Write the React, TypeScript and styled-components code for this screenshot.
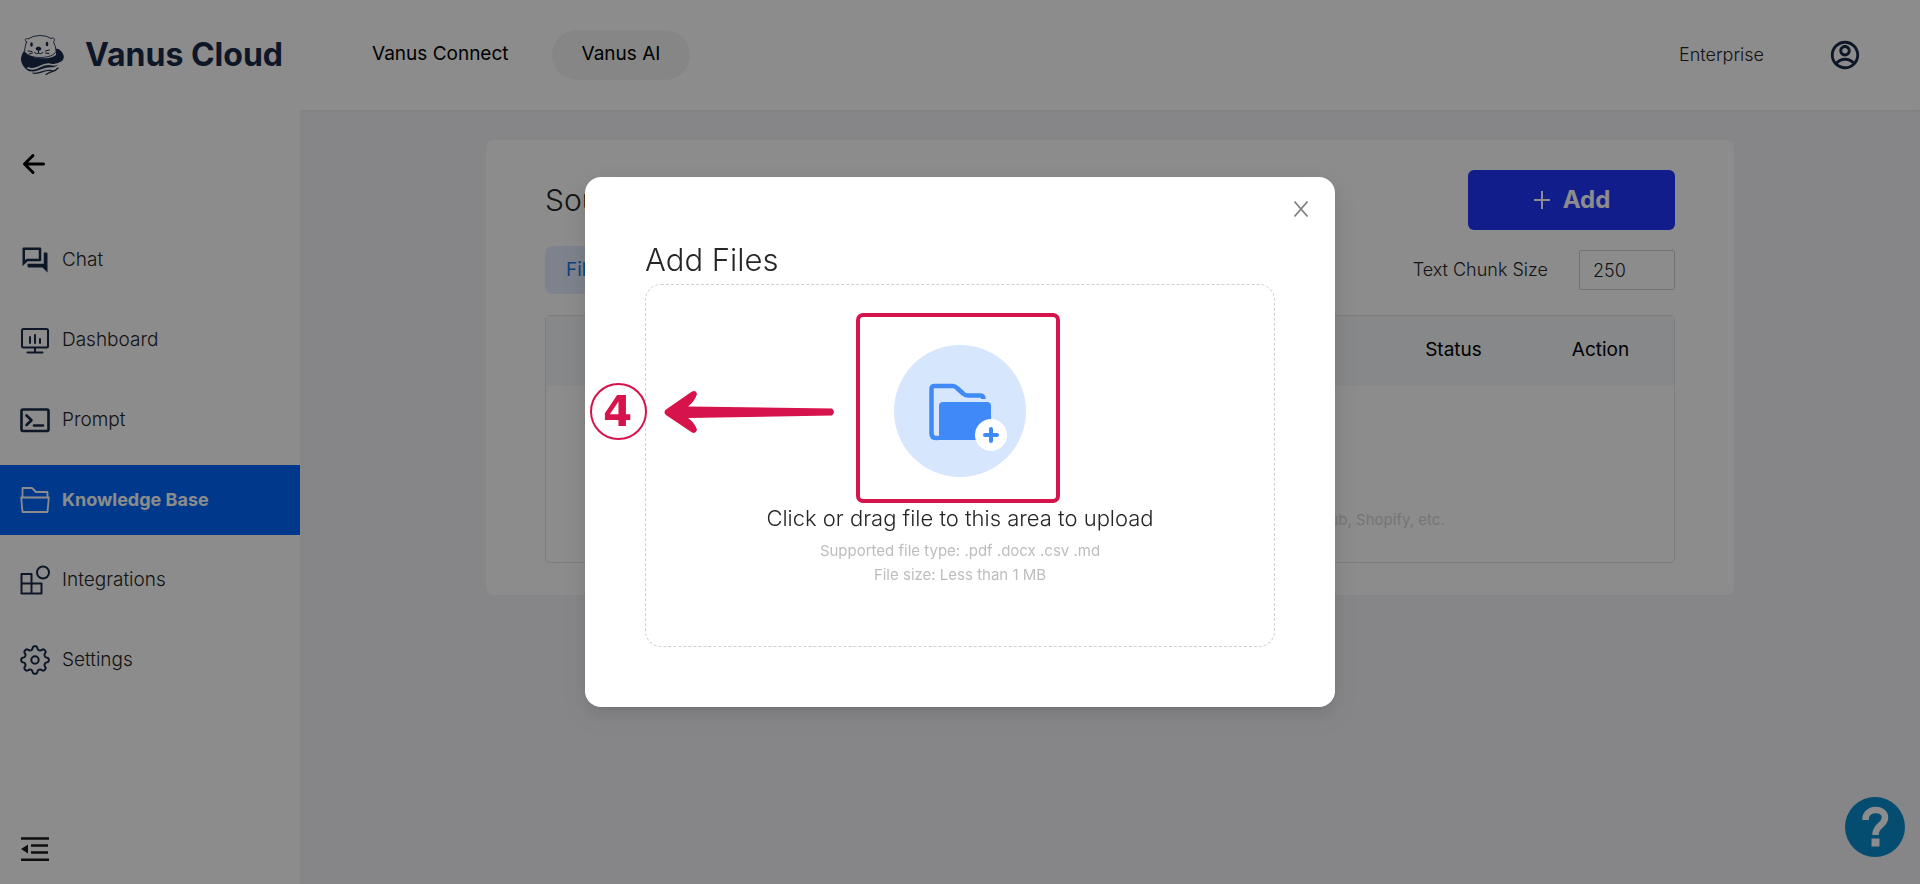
import React from 'react';
import styled, { createGlobalStyle, css } from 'styled-components';
import { MdOutlineForum } from 'react-icons/md';
import { RiAccountCircleLine } from 'react-icons/ri';

const GlobalStyle = createGlobalStyle`
  * { box-sizing: border-box; }
  body {
    margin: 0;
    font-family: Inter, "Open Sans", sans-serif;
    font-weight: 300;
    font-size: 18px;
    line-height: 24px;
    color: #262626;
    background: #f5f5fa;
  }
  button, input { font: inherit; color: inherit; }
  h1, h2, p { margin: 0; font-weight: 300; }
  a { color: inherit; text-decoration: none; }
`;

const navy = '#1a2a48';
const crimson = '#d6134a';

const Page = styled.div`
  display: flex;
  flex-direction: column;
  min-height: 100vh;
`;

const Header = styled.header`
  display: flex;
  align-items: center;
  height: 110px;
  background: #fff;
`;

const Brand = styled.a`
  display: flex;
  align-items: center;
  gap: 20px;
  width: 342px;
  padding-left: 20px;
  font-size: 32px;
  line-height: 40px;
  font-weight: 700;
  color: ${navy};
  white-space: nowrap;
`;

const TopNav = styled.nav`
  display: flex;
  align-items: center;
  gap: 13px;
  flex: 1;
`;

const TopLink = styled.a<{ $active?: boolean }>`
  padding: 12px 30px 14px;
  border-radius: 26px;
  font-size: 19px;
  font-weight: 400;
  color: #000;
  background: ${(p) => (p.$active ? '#f4f4f4' : 'transparent')};
`;

const Account = styled.div`
  display: flex;
  align-items: center;
  gap: 64px;
  padding-right: 58px;
`;

const IconButton = styled.button`
  display: flex;
  padding: 0;
  border: 0;
  background: none;
  color: ${navy};
  cursor: pointer;
`;

const Body = styled.div`
  display: flex;
  flex: 1;
`;

const Sidebar = styled.aside`
  display: flex;
  flex-direction: column;
  justify-content: space-between;
  width: 300px;
  padding: 39px 0 20px;
  background: #fff;
`;

const Back = styled(IconButton)`
  margin: 0 0 46px 20px;
  color: #000;
`;

const Collapse = styled(IconButton)`
  margin-left: 20px;
  color: #1a1a1a;
`;

const Menu = styled.nav`
  display: flex;
  flex-direction: column;
  gap: 10px;
`;

const MenuItem = styled.a<{ $active?: boolean }>`
  display: flex;
  align-items: center;
  gap: 12px;
  height: 70px;
  padding-left: 20px;
  font-size: 19px;
  color: #262626;
  svg { color: ${navy}; }
  ${(p) =>
    p.$active &&
    css`
      background: #0068ff;
      font-size: 18px;
      font-weight: 700;
      color: #fff;
      svg { color: #fff; }
    `}
`;

const Main = styled.main`
  flex: 1;
  padding: 30px 186px;
  box-shadow: inset 0 2px 2px rgba(0, 0, 0, 0.04);
`;

const Card = styled.section`
  display: flex;
  flex-direction: column;
  padding: 30px 59px 32px;
  border-radius: 8px;
  background: #fff;
`;

const CardRow = styled.div`
  display: flex;
  align-items: center;
  justify-content: space-between;
`;

const Title = styled.h1`
  font-size: 30px;
  line-height: 40px;
`;

const AddButton = styled.button`
  display: flex;
  align-items: center;
  justify-content: center;
  gap: 12px;
  width: 207px;
  height: 60px;
  border: 0;
  border-radius: 6px;
  background: #2136ff;
  color: #fff;
  font-size: 24px;
  font-weight: 700;
`;

const Toolbar = styled(CardRow)`
  margin: 16px 0 21px;
`;

const Tab = styled.button`
  height: 48px;
  padding: 0 21px;
  border: 0;
  border-radius: 8px;
  background: #e3edff;
  color: #1677e0;
  font-size: 19px;
  font-weight: 400;
`;

const ChunkLabel = styled.label`
  display: flex;
  align-items: center;
  gap: 31px;
`;

const ChunkInput = styled.input`
  width: 96px;
  height: 40px;
  padding: 0 13px;
  border: 1px solid #cfcfcf;
  border-radius: 2px;
  background: #fff;
`;

const TableFrame = styled.div`
  border: 1px solid #e4e4e4;
  border-radius: 4px;
`;

const Table = styled.table`
  width: 100%;
  table-layout: fixed;
  border-collapse: collapse;
`;

const Th = styled.th<{ $narrow?: boolean }>`
  width: ${(p) => (p.$narrow ? '147px' : 'auto')};
  height: 70px;
  padding: 0 0 2px;
  background: #f5f8fa;
  color: #000;
  font-size: 19px;
  font-weight: 400;
`;

const EmptyCell = styled.td`
  height: 176px;
  padding: 92px 6px 0 0;
  text-align: center;
  font-size: 15px;
  font-weight: 400;
  color: #d6d6d6;
`;

const HelpButton = styled.button`
  position: fixed;
  right: 15px;
  bottom: 27px;
  display: flex;
  align-items: center;
  justify-content: center;
  width: 60px;
  height: 60px;
  padding: 0;
  border: 0;
  border-radius: 50%;
  background: #0a8bce;
  color: #fff;
`;

const Overlay = styled.div`
  position: fixed;
  inset: 0;
  display: flex;
  align-items: flex-start;
  justify-content: center;
  padding-top: 177px;
  background: rgba(0, 0, 0, 0.45);
`;

const Dialog = styled.section`
  position: relative;
  display: flex;
  flex-direction: column;
  width: 750px;
  padding: 63px 60px 60px;
  border-radius: 16px;
  background: #fff;
  box-shadow: 0 6px 16px rgba(0, 0, 0, 0.08), 0 3px 6px -4px rgba(0, 0, 0, 0.12),
    0 9px 28px 8px rgba(0, 0, 0, 0.05);
`;

const CloseButton = styled(IconButton)`
  position: absolute;
  top: 23px;
  right: 25px;
  color: #808080;
`;

const DialogTitle = styled.h2`
  margin-bottom: 4px;
  font-size: 31px;
  line-height: 40px;
`;

const DropZone = styled.label`
  display: flex;
  flex-direction: column;
  align-items: center;
  height: 363px;
  padding-top: 60px;
  border: 1px dashed #d0d0d0;
  border-radius: 16px;
  cursor: pointer;
`;

const FileInput = styled.input`
  position: absolute;
  width: 1px;
  height: 1px;
  opacity: 0;
`;

const UploadBadge = styled.span`
  position: relative;
  display: flex;
  width: 132px;
  height: 132px;
`;

const Highlight = styled.span`
  position: absolute;
  inset: -32px -34px -26px -38px;
  border: 4px solid ${crimson};
  border-radius: 7px;
`;

const Pointer = styled.span`
  position: absolute;
  left: 5px;
  top: 206px;
  display: flex;
  align-items: center;
  gap: 17px;
`;

const StepNumber = styled.span`
  display: flex;
  align-items: center;
  justify-content: center;
  width: 57px;
  height: 57px;
  padding-right: 2px;
  border: 2px solid ${crimson};
  border-radius: 50%;
  color: ${crimson};
  font-family: "DejaVu Sans", sans-serif;
  font-size: 42px;
  font-weight: 700;
`;

const DropText = styled.p`
  margin: 27px 0 7px;
  font-size: 22px;
  line-height: 28px;
`;

const DropHint = styled.p`
  font-size: 15px;
  font-weight: 400;
  color: #bdbdbd;
`;

const Otter = () => (
  <svg width="45" height="42" viewBox="0 0 45 42" fill="none" strokeLinecap="round">
    <path d="M4 17C0 22 0 28 4 33C8 38 14 40 21 37C28 34 36 34 40 29C43 27 45 23 43 20C41 16 38 14 36 15L36 21C30 26 11 26 4 17Z" fill={navy} />
    <path d="M6.500 8C4 6 5.500 3.500 8 5Q13 1.500 20 1.500Q27 1.500 31 4.500C34 2.500 35.500 6 33.500 8Q36 12 36 17.500C33 25 9 26 4.500 17.500Q5 12 6.500 8Z" fill="#fff" stroke={navy} strokeWidth="0.900" />
    <ellipse cx="11.500" cy="10.500" rx="1.300" ry="2.200" fill={navy} />
    <ellipse cx="27" cy="10" rx="1.300" ry="2.200" fill={navy} />
    <path d="M15.500 15Q16 12.500 18.500 12.500Q21 12.500 21.500 15Q20.500 16.500 18.500 17Q16.500 16.500 15.500 15Z" fill={navy} />
    <path d="M18.500 17V19M14.500 18.500Q17 21 18.500 19Q20.500 21 23 18.500M8 17L12 17.500M9 20L12.500 19M25.500 17L29.500 16M25.500 19L29 19.500" stroke={navy} strokeWidth="1" />
    <path d="M8 34C17 38 21 28 31 30.500C36 32 39 30 42 28M11 38C20 40 24 31.500 34 34.500C37 35 39 34 41 32.500" stroke="#fff" strokeWidth="1.700" />
    <path d="M13 39C20 41 25 34 33 37M26 40.500C31 37 35 38 38 34" stroke={navy} strokeWidth="1.300" />
  </svg>
);

const BackIcon = () => (
  <svg width="30" height="30" viewBox="0 0 30 30" fill="none" stroke="currentColor" strokeWidth="3" strokeLinecap="round" strokeLinejoin="round">
    <path d="M23.500 15H5M13 6.500L4.500 15L13 23.500" />
  </svg>
);

const DashboardIcon = () => (
  <svg width="30" height="30" viewBox="0 0 30 30" fill="none" stroke="currentColor" strokeWidth="2" strokeLinecap="round">
    <rect x="2" y="4" width="26" height="18.500" rx="1.500" />
    <path d="M15 23V26M7.500 27.500H22.500" />
    <path d="M10 12V18M15 10V18M20 14V18" />
  </svg>
);

const PromptIcon = () => (
  <svg width="30" height="30" viewBox="0 0 30 30" fill="none" stroke="currentColor" strokeWidth="2.600" strokeLinecap="round" strokeLinejoin="round">
    <rect x="1.500" y="4.500" width="27" height="21.500" rx="1.500" />
    <path d="M6.500 10.500L11.500 15.200L6.500 20M14 20.500H23" />
  </svg>
);

const FolderIcon = () => (
  <svg width="30" height="30" viewBox="0 0 30 30" fill="none" stroke="currentColor" strokeWidth="1.800" strokeLinejoin="round">
    <path d="M2.500 12V3H12L16 7H27.500V12M1.200 12.500H28.800L27.500 27H2.500Z" />
  </svg>
);

const IntegrationsIcon = () => (
  <svg width="30" height="30" viewBox="0 0 30 30" fill="none" stroke="currentColor" strokeWidth="2" strokeLinejoin="round">
    <path d="M1.500 9H11.500V28.500H1.500ZM1.500 18.500H21.500V28.500H1.500Z" />
    <circle cx="23" cy="7.500" r="6" />
  </svg>
);

const gearOutline =
  Array.from({ length: 160 }, (_, i) => {
    const angle = (i / 160) * Math.PI * 2;
    const radius = 12.2 + 1.7 * Math.tanh(1.8 * Math.cos(angle * 8));
    const x = 15 + radius * Math.sin(angle);
    const y = 15 - radius * Math.cos(angle);
    return `${i ? 'L' : 'M'}${x.toFixed(2)} ${y.toFixed(2)}`;
  }).join('') + 'Z';

const SettingsIcon = () => (
  <svg width="30" height="30" viewBox="0 0 30 30" fill="none" stroke="currentColor" strokeWidth="2" strokeLinejoin="round">
    <path d={gearOutline} />
    <circle cx="15" cy="15" r="3.700" />
  </svg>
);

const CollapseIcon = () => (
  <svg width="30" height="30" viewBox="0 0 30 30" fill="currentColor">
    <path d="M1 3.200H29V5.800H1ZM11 10.200H28V12.800H11ZM11 17.200H28V19.800H11ZM1 24.400H29V27H1ZM1 15L8 10.500V19.500Z" />
  </svg>
);

const PlusIcon = () => (
  <svg width="18" height="18" viewBox="0 0 18 18" stroke="currentColor" strokeWidth="2">
    <path d="M9 0V18M1 9H17" />
  </svg>
);

const CloseIcon = () => (
  <svg width="18" height="18" viewBox="0 0 18 18" stroke="currentColor" strokeWidth="1.800">
    <path d="M2.500 1.500L15.500 16.500M15.500 1.500L2.500 16.500" />
  </svg>
);

const HelpIcon = () => (
  <svg width="30" height="42" viewBox="0 0 30 42" fill="none" stroke="currentColor">
    <path d="M5.500 14C5 1 25 1 25 11.500C25 20 15.500 18 15.500 29" strokeWidth="6.500" />
    <path d="M11.500 36.500H19.500" strokeWidth="8" />
  </svg>
);

const UploadIcon = () => (
  <svg width="132" height="132" viewBox="0 0 132 132" fill="none">
    <circle cx="66" cy="66" r="66" fill="#d6e6fd" />
    <path d="M44 93H42Q37.500 93 37.500 88.500V44Q37.500 41 40.500 41H59Q61 41 63 43L69 48.500Q71 50.500 74 50.500H86Q89.500 50.500 89.500 54" stroke="#408af8" strokeWidth="4.500" />
    <rect x="45" y="57" width="52" height="38" rx="4" fill="#408af8" />
    <path d="M41 91H50V95H41Z" fill="#408af8" />
    <circle cx="97" cy="90" r="16" fill="#fff" />
    <path d="M97 84V96M91 90H103" stroke="#408af8" strokeWidth="4" strokeLinecap="round" />
  </svg>
);

const ArrowIcon = () => (
  <svg width="172" height="44" viewBox="0 0 172 44" fill={crimson}>
    <path d="M2 19.500L28 1.500Q32 -0.500 33 4Q31 11 24 16.500L168 18.500Q172 22 168 25.500L24 28Q31 33 33 40Q32 44 28 42.500L2 25Q-1 22 2 19.500Z" />
  </svg>
);

const menu = [
  { label: 'Chat', icon: <MdOutlineForum size={30} /> },
  { label: 'Dashboard', icon: <DashboardIcon /> },
  { label: 'Prompt', icon: <PromptIcon /> },
  { label: 'Knowledge Base', icon: <FolderIcon />, active: true },
  { label: 'Integrations', icon: <IntegrationsIcon /> },
  { label: 'Settings', icon: <SettingsIcon /> },
];

export default function App() {
  return (
    <>
      <GlobalStyle />
      <Page>
        <Header>
          <Brand href="#">
            <Otter />
            Vanus Cloud
          </Brand>
          <TopNav>
            <TopLink href="#">Vanus Connect</TopLink>
            <TopLink href="#" $active>Vanus AI</TopLink>
          </TopNav>
          <Account>
            <span>Enterprise</span>
            <IconButton aria-label="Account">
              <RiAccountCircleLine size={34} />
            </IconButton>
          </Account>
        </Header>
        <Body>
          <Sidebar>
            <div>
              <Back aria-label="Back"><BackIcon /></Back>
              <Menu>
                {menu.map((item) => (
                  <MenuItem key={item.label} href="#" $active={item.active}>
                    {item.icon}
                    {item.label}
                  </MenuItem>
                ))}
              </Menu>
            </div>
            <Collapse aria-label="Collapse menu"><CollapseIcon /></Collapse>
          </Sidebar>
          <Main>
            <Card>
              <CardRow>
                <Title>Sources</Title>
                <AddButton><PlusIcon />Add</AddButton>
              </CardRow>
              <Toolbar>
                <Tab>Files</Tab>
                <ChunkLabel>
                  Text Chunk Size
                  <ChunkInput type="text" defaultValue="250" />
                </ChunkLabel>
              </Toolbar>
              <TableFrame>
                <Table>
                  <thead>
                    <tr>
                      <Th>Name</Th>
                      <Th $narrow>Status</Th>
                      <Th $narrow>Action</Th>
                    </tr>
                  </thead>
                  <tbody>
                    <tr>
                      <EmptyCell colSpan={3}>
                        No sources yet. You can add knowledge from local files, websites, Notion, GitHub, Shopify, etc.
                      </EmptyCell>
                    </tr>
                  </tbody>
                </Table>
              </TableFrame>
            </Card>
          </Main>
        </Body>
      </Page>
      <HelpButton aria-label="Help"><HelpIcon /></HelpButton>
      <Overlay>
        <Dialog role="dialog" aria-modal="true" aria-labelledby="add-files">
          <CloseButton aria-label="Close"><CloseIcon /></CloseButton>
          <DialogTitle id="add-files">Add Files</DialogTitle>
          <DropZone>
            <FileInput type="file" accept=".pdf,.docx,.csv,.md" />
            <UploadBadge>
              <UploadIcon />
              <Highlight />
            </UploadBadge>
            <DropText>Click or drag file to this area to upload</DropText>
            <DropHint>Supported file type: .pdf .docx .csv .md</DropHint>
            <DropHint>File size: Less than 1 MB</DropHint>
          </DropZone>
          <Pointer>
            <StepNumber>4</StepNumber>
            <ArrowIcon />
          </Pointer>
        </Dialog>
      </Overlay>
    </>
  );
}
